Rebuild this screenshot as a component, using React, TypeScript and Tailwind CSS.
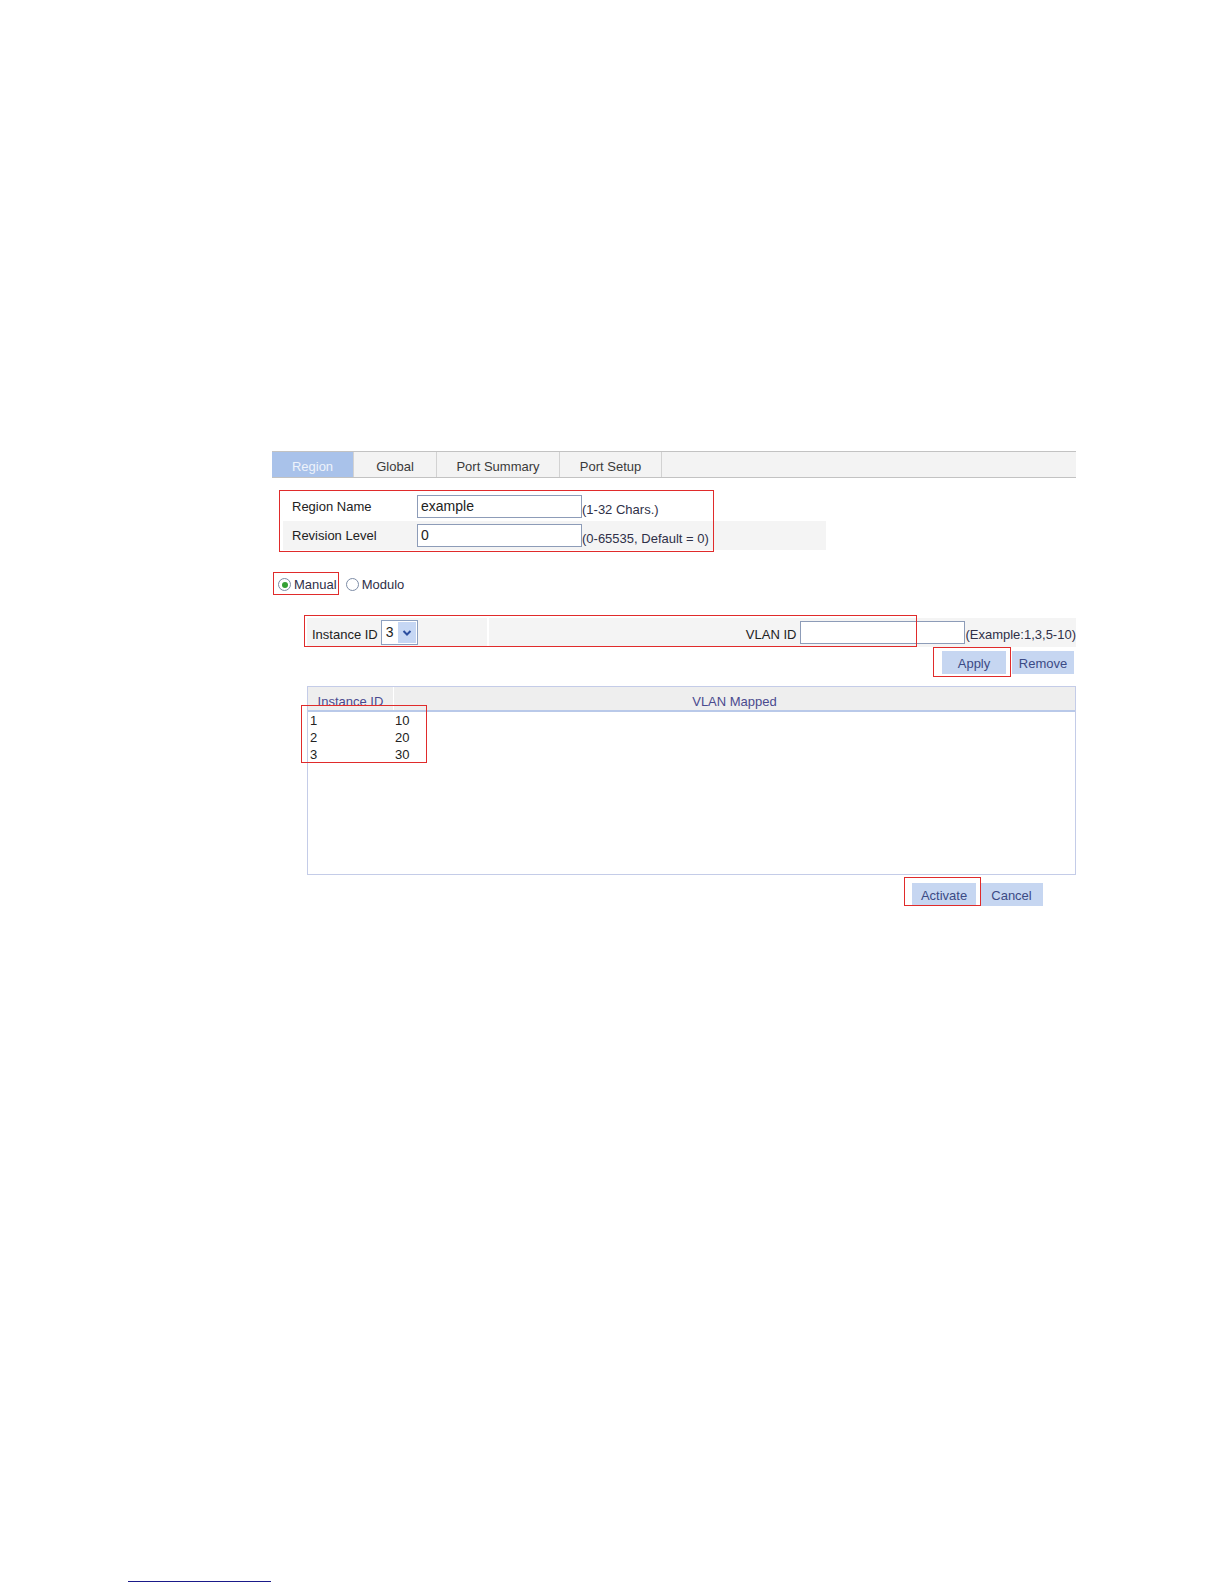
import React from "react";

function RedBox({ className }: { className: string }) {
  return <div className={`absolute border border-[#e02b2b] pointer-events-none ${className}`} />;
}

function Btn({ label, w }: { label: string; w: string }) {
  return (
    <div className={`${w} h-[23px] flex items-center justify-center pt-[1px] bg-[#c6d6f1] text-[#3b4a85]`}>
      {label}
    </div>
  );
}

function Radio({ checked }: { checked?: boolean }) {
  return (
    <span className="w-[13px] h-[13px] rounded-full border border-[#7d8ca6] bg-white flex items-center justify-center shrink-0">
      {checked && <span className="w-[6px] h-[6px] rounded-full bg-[#35a035]" />}
    </span>
  );
}

export default function App() {
  const rows = [
    ["1", "10"],
    ["2", "20"],
    ["3", "30"],
  ];
  return (
    <div className="relative flex flex-col w-[1224px] h-[1584px] bg-white text-[13px] leading-[15px] text-[#222] font-['Liberation_Sans',Arial,sans-serif]">
      <div className="ml-[272px] mt-[451px] w-[804px]">
        {/* Tabs */}
        <div className="flex h-[27px] border-y border-[#c2c2c2] bg-[#f3f3f3] text-[#3a3a3a]">
          <div className="w-[82px] flex items-center justify-center pt-[3px] bg-[#a9c2ea] text-[#eef3fb] border-r border-[#d2d2d2]">
            Region
          </div>
          <div className="w-[83px] flex items-center justify-center pt-[3px] border-r border-[#d2d2d2]">Global</div>
          <div className="w-[123px] flex items-center justify-center pt-[3px] border-r border-[#d2d2d2]">Port Summary</div>
          <div className="w-[102px] flex items-center justify-center pt-[3px] border-r border-[#d2d2d2]">Port Setup</div>
          <div className="flex-1" />
        </div>

        {/* Region form */}
        <div className="ml-[11px] mt-[13px] w-[543px]">
          <div className="flex items-center h-[30px]">
            <div className="w-[134px] pl-[9px]">Region Name</div>
            <div className="flex items-end">
              <div className="w-[165px] h-[23px] border border-[#8d9cb8] bg-white flex items-center pl-[3px] text-[14px]">
                example
              </div>
              <span className="mb-[1px] text-[#2f3048]">(1-32 Chars.)</span>
            </div>
          </div>
          <div className="flex items-center h-[29px] bg-[#f4f4f4]">
            <div className="w-[134px] pl-[9px]">Revision Level</div>
            <div className="flex items-end">
              <div className="w-[165px] h-[23px] border border-[#8d9cb8] bg-white flex items-center pl-[3px] text-[14px]">
                0
              </div>
              <span className="mb-[1px] text-[#2f3048]">(0-65535, Default = 0)</span>
            </div>
          </div>
        </div>

        {/* Radios */}
        <div className="mt-[23px] h-[23px] flex items-center pl-[6px] text-[#2f3048]">
          <Radio checked />
          <span className="ml-[3px]">Manual</span>
          <span className="ml-[9px]">
            <Radio />
          </span>
          <span className="ml-[3px]">Modulo</span>
        </div>

        {/* Instance section */}
        <div className="ml-[35px] w-[769px]">
          <div className="mt-[22px] h-[29px] flex bg-[#f4f4f4]">
            <div className="w-[180px] flex items-center pl-[5px]">
              <span className="pt-[3px]">Instance ID</span>
              <div className="ml-[3px] w-[37px] h-[25px] border border-[#8da0c0] bg-white flex items-center">
                <span className="pl-[4px] text-[14px]">3</span>
                <div className="ml-auto mr-[1px] w-[18px] h-[21px] bg-[#c6d7f4] flex items-center justify-center">
                  <svg width="10" height="8" viewBox="0 0 10 8">
                    <path d="M1.5 2 L5 5.5 L8.5 2" fill="none" stroke="#2b4ea0" strokeWidth="2" />
                  </svg>
                </div>
              </div>
            </div>
            <div className="w-[2px] bg-white" />
            <div className="flex-1 flex items-center justify-end">
              <span className="pt-[3px]">VLAN ID</span>
              <div className="ml-[4px] w-[165px] h-[23px] border border-[#8d9cb8] bg-white" />
              <span className="pt-[3px] text-[#2f3048]">(Example:1,3,5-10)</span>
            </div>
          </div>

          <div className="mt-[4px] flex justify-end gap-[6px] pr-[2px]">
            <Btn label="Apply" w="w-[64px]" />
            <Btn label="Remove" w="w-[62px]" />
          </div>

          {/* Table */}
          <div className="mt-[12px] h-[189px] border border-[#c4cce8] bg-white">
            <div className="flex h-[25px] bg-[#eeeeee] border-b-2 border-[#b9c9e9] text-[#4a4a8e]">
              <div className="w-[85px] flex items-end justify-center pb-[1px]">Instance ID</div>
              <div className="w-px bg-white" />
              <div className="flex-1 flex items-end justify-center pb-[1px]">VLAN Mapped</div>
            </div>
            {rows.map(([a, b]) => (
              <div key={a} className="flex h-[17px] items-center">
                <div className="w-[85px] pl-[2px]">{a}</div>
                <div className="pl-[2px]">{b}</div>
              </div>
            ))}
          </div>

          <div className="mt-[8px] flex justify-end gap-[4px] pr-[33px]">
            <Btn label="Activate" w="w-[64px]" />
            <Btn label="Cancel" w="w-[63px]" />
          </div>
        </div>
      </div>

      <div className="mt-auto mb-[2px] ml-[128px] w-[143px] h-px bg-[#1a1a8a]" />

      <RedBox className="left-[279px] top-[490px] w-[435px] h-[62px]" />
      <RedBox className="left-[273px] top-[572px] w-[66px] h-[23px]" />
      <RedBox className="left-[304px] top-[615px] w-[613px] h-[32px]" />
      <RedBox className="left-[933px] top-[647px] w-[78px] h-[30px]" />
      <RedBox className="left-[301px] top-[705px] w-[126px] h-[58px]" />
      <RedBox className="left-[904px] top-[877px] w-[77px] h-[29px]" />
    </div>
  );
}
